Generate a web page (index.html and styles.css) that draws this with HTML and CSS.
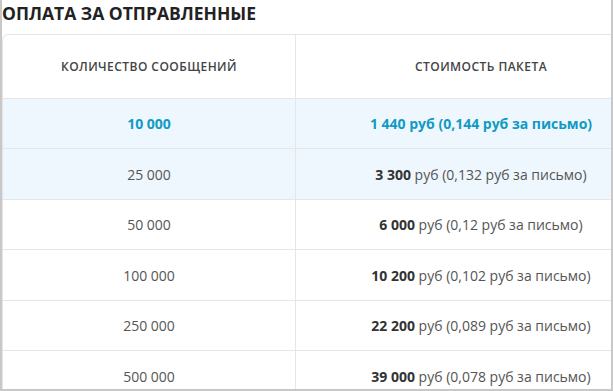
FILE: index.html
```html
<!DOCTYPE html>
<html lang="ru">
<head>
<meta charset="utf-8">
<link rel="stylesheet" href="styles.css">
</head>
<body>
<div class="frame">
  <h2 class="title">ОПЛАТА ЗА ОТПРАВЛЕННЫЕ</h2>
  <table class="prices">
    <thead>
      <tr><th>Количество сообщений</th><th>Стоимость пакета</th></tr>
    </thead>
    <tbody>
      <tr class="hl active"><td>10 000</td><td><b>1 440</b> руб (0,144 руб за письмо)</td></tr>
      <tr class="hl"><td>25 000</td><td><b>3 300</b> руб (0,132 руб за письмо)</td></tr>
      <tr><td>50 000</td><td><b>6 000</b> руб (0,12 руб за письмо)</td></tr>
      <tr><td>100 000</td><td><b>10 200</b> руб (0,102 руб за письмо)</td></tr>
      <tr><td>250 000</td><td><b>22 200</b> руб (0,089 руб за письмо)</td></tr>
      <tr><td>500 000</td><td><b>39 000</b> руб (0,078 руб за письмо)</td></tr>
    </tbody>
  </table>
</div>
</body>
</html>
```
FILE: styles.css
```css
html, body {
  margin: 0;
  padding: 0;
  background: #fff;
}
.frame {
  box-sizing: border-box;
  width: 613px;
  height: 391px;
  overflow: hidden;
  border-left: 2px solid #c8c8c8;
  border-right: 2px solid #c8c8c8;
  border-bottom: 2px solid #c8c8c8;
  font-family: "Open Sans", "Liberation Sans", sans-serif;
}
.title {
  margin: 1px 0 9px 0;
  font-size: 17.5px;
  line-height: 24px;
  font-weight: 700;
  color: #222;
}
.prices {
  width: 665px;
  border-collapse: separate;
  border-spacing: 0;
  border: 1px solid #e4e4e4;
  border-radius: 6px 0 0 0;
  table-layout: fixed;
}
.prices th,
.prices td {
  padding: 0;
  text-align: center;
  vertical-align: middle;
  border-bottom: 1px solid #e6e6e6;
}
.prices th:first-child,
.prices td:first-child {
  width: 292px;
  border-right: 1px solid #e6e6e6;
}
.prices th {
  height: 63px;
  font-size: 12px;
  font-weight: 650;
  text-transform: uppercase;
  color: #444;
  letter-spacing: 0.45px;
}
.prices td {
  height: 49px;
  font-size: 14px;
  color: #555;
}
.prices tbody tr:nth-child(even) td {
  height: 50px;
}
.prices td b {
  font-weight: 700;
  color: #333;
}
.prices tr.hl td {
  background: #eef7fd;
}
.prices tr.active td,
.prices tr.active td b {
  color: #119ac4;
  font-weight: 700;
}
```
